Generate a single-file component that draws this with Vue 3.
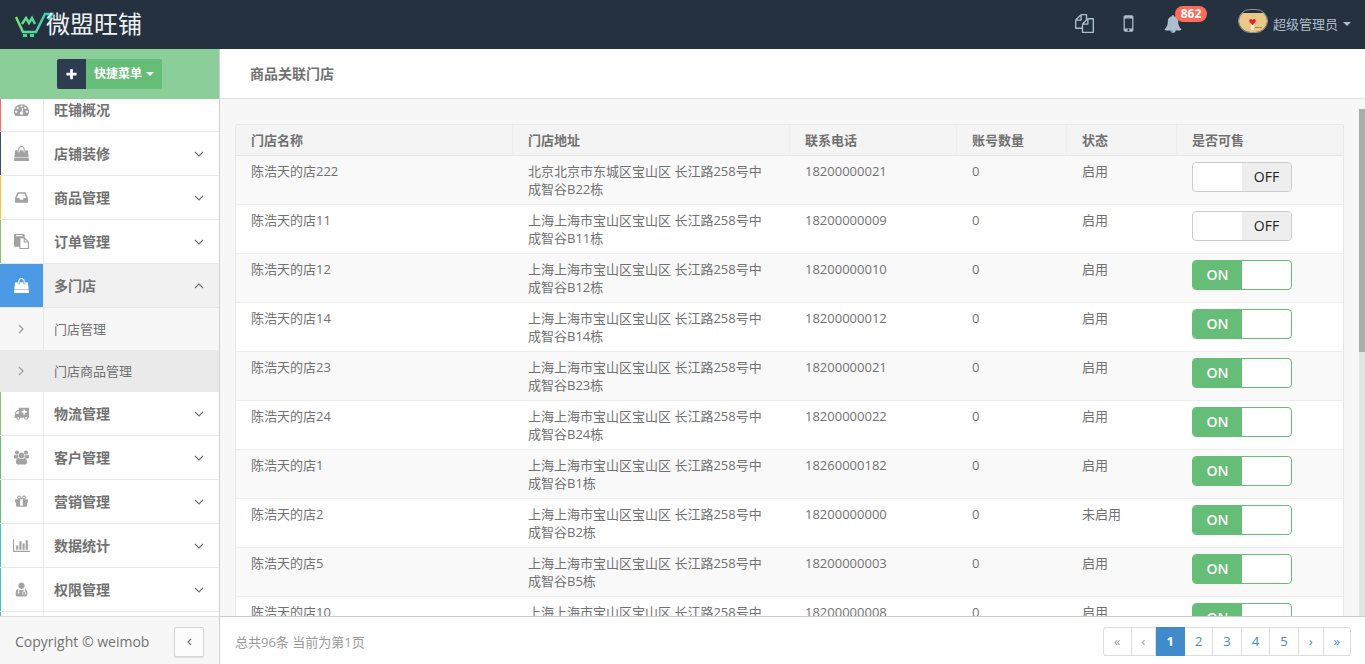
<script setup>
import { onMounted, ref } from 'vue'

const bag =
  'M1757 1408l35 313q3 28-16 50-19 21-48 21h-1664q-29 0-48-21-19-22-16-50l35-313h1722zm-93-839l86 775h-1708l86-775q3-24 21-40.5t43-16.5h256v128q0 53 37.5 90.5t90.5 37.5 90.5-37.5 37.5-90.5v-128h384v128q0 53 37.5 90.5t90.5 37.5 90.5-37.5 37.5-90.5v-128h256q25 0 43 16.5t21 40.5zm-384-185v256q0 26-19 45t-45 19-45-19-19-45v-256q0-106-75-181t-181-75-181 75-75 181v256q0 26-19 45t-45 19-45-19-19-45v-256q0-159 112.5-271.5t271.5-112.5 271.5 112.5 112.5 271.5z'

const menu = [
  {
    name: '旺铺概况',
    color: 'red',
    leaf: true,
    icon: 'M384 1152q0-53-37.5-90.5t-90.5-37.5-90.5 37.5-37.5 90.5 37.5 90.5 90.5 37.5 90.5-37.5 37.5-90.5zm192-448q0-53-37.5-90.5t-90.5-37.5-90.5 37.5-37.5 90.5 37.5 90.5 90.5 37.5 90.5-37.5 37.5-90.5zm428 481l101-382q6-26-7.5-48.5t-38.5-29.5-48 6.5-30 39.5l-101 382q-60 5-107 43.5t-63 98.5q-20 77 20 146t117 89 146-20 89-117q16-60-6-117t-72-91zm660-33q0-53-37.5-90.5t-90.5-37.5-90.5 37.5-37.5 90.5 37.5 90.5 90.5 37.5 90.5-37.5 37.5-90.5zm-640-640q0-53-37.5-90.5t-90.5-37.5-90.5 37.5-37.5 90.5 37.5 90.5 90.5 37.5 90.5-37.5 37.5-90.5zm448 192q0-53-37.5-90.5t-90.5-37.5-90.5 37.5-37.5 90.5 37.5 90.5 90.5 37.5 90.5-37.5 37.5-90.5zm320 448q0 261-141 483-19 29-54 29h-1402q-35 0-54-29-141-221-141-483 0-182 71-348t191-286 286-191 348-71 348 71 286 191 191 286 71 348z',
  },
  { name: '店铺装修', color: 'navy', icon: bag },
  {
    name: '商品管理',
    color: 'yellow',
    icon: 'M1151 960h316q-1-3-2.5-8t-2.5-8l-212-496h-708l-212 496q-1 2-2.5 8t-2.5 8h316l95 192h320zm513 30v482q0 26-19 45t-45 19h-1408q-26 0-45-19t-19-45v-482q0-62 25-123l238-552q10-25 36.5-42t52.5-17h832q26 0 52.5 17t36.5 42l238 552q25 61 25 123z',
  },
  {
    name: '订单管理',
    color: 'lime',
    icon: 'M768 1664h896v-640h-416q-40 0-68-28t-28-68v-416h-384v1152zm256-1440v-64q0-13-9.5-22.5t-22.5-9.5h-704q-13 0-22.5 9.5t-9.5 22.5v64q0 13 9.5 22.5t22.5 9.5h704q13 0 22.5-9.5t9.5-22.5zm256 672h299l-299-299v299zm512 128v672q0 40-28 68t-68 28h-960q-40 0-68-28t-28-68v-160h-544q-40 0-68-28t-28-68v-1344q0-40 28-68t68-28h1088q40 0 68 28t28 68v328q21 13 36 28l408 408q28 28 48 76t20 88z',
  },
  {
    name: '多门店',
    color: 'blue',
    open: true,
    icon: bag,
    children: [{ name: '门店管理' }, { name: '门店商品管理', current: true }],
  },
  {
    name: '物流管理',
    color: 'lime',
    box: '160 64 1700 1700',
    icon: 'M1792 256q26 0 45 19t19 45v1024q0 64-64 64h-32a224 224 0 0 1-448 0h-448a224 224 0 0 1-448 0h-96q-128 0-128-96 0-64 64-64v-400q0-50 36-86l198-198q36-36 86-36h128v-208q0-64 64-64zm-576 192v192h-192v192h192v192h192v-192h192v-192h-192v-192zm-512 208h-128l-256 256v32h384zm-64 656a96 96 0 1 0 1 0zm896 0a96 96 0 1 0 1 0z',
  },
  {
    name: '客户管理',
    color: 'green',
    box: '0 0 1920 1792',
    icon: 'M593 896q-162 5-265 128h-134q-82 0-138-40.5t-56-118.5q0-353 124-353 6 0 43.5 21t97.5 42.5 119 21.5q67 0 133-23-5 37-5 66 0 139 81 256zm1071 637q0 120-73 189.5t-194 69.5h-874q-121 0-194-69.5t-73-189.5q0-53 3.5-103.5t14-109 26.5-108.5 43-97.5 62-81 85.5-53.5 111.5-20q10 0 43 21.5t73 48 107 48 135 21.5 135-21.5 107-48 73-48 43-21.5q61 0 111.5 20t85.5 53.5 62 81 43 97.5 26.5 108.5 14 109 3.5 103.5zm-1024-1277q0 106-75 181t-181 75-181-75-75-181 75-181 181-75 181 75 75 181zm704 384q0 159-112.5 271.5t-271.5 112.5-271.5-112.5-112.5-271.5 112.5-271.5 271.5-112.5 271.5 112.5 112.5 271.5zm576 225q0 78-56 118.5t-138 40.5h-134q-103-123-265-128 81-117 81-256 0-29-5-66 66 23 133 23 59 0 119-21.5t97.5-42.5 43.5-21q124 0 124 353zm-128-609q0 106-75 181t-181 75-181-75-75-181 75-181 181-75 181 75 75 181z',
  },
  {
    name: '营销管理',
    color: 'green',
    icon: 'M1056 1356v-716h-320v716q0 25 18 38.5t46 13.5h192q28 0 46-13.5t18-38.5zm-456-844h195l-126-161q-26-31-69-31-40 0-68 28t-28 68 28 68 68 28zm688-96q0-40-28-68t-68-28q-43 0-69 31l-125 161h194q40 0 68-28t28-68zm376 256v320q0 14-9 23t-23 9h-96v416q0 40-28 68t-68 28h-1088q-40 0-68-28t-28-68v-416h-96q-14 0-23-9t-9-23v-320q0-14 9-23t23-9h440q-93 0-158.5-65.5t-65.5-158.5 65.5-158.5 158.5-65.5q107 0 168 77l128 165 128-165q61-77 168-77 93 0 158.5 65.5t65.5 158.5-65.5 158.5-158.5 65.5h440q14 0 23 9t9 23z',
  },
  {
    name: '数据统计',
    color: 'teal',
    box: '0 0 2048 1792',
    wide: true,
    icon: 'M640 896v512h-256v-512h256zm384-512v1024h-256v-1024h256zm1024 1152v128h-2048v-1536h128v1408h1920zm-640-896v768h-256v-768h256zm384-384v1152h-256v-1152h256z',
  },
  {
    name: '权限管理',
    color: 'teal',
    icon: 'M896 64a384 384 0 1 0 1 0zM480 830q-288 60-288 620 0 278 256 278h896q256 0 256-278 0-560-288-620l-32 240q150 60 150 200v130a64 64 0 1 1-96 0v-130q0-96-118-96t-118 96v130a64 64 0 1 1-96 0v-130q0-150 140-200l20-160q-130 70-266 70t-266-70l-20 270a110 110 0 1 1-120 0z',
  },
]

const rows = ref(
  [
    ['222', '22', '18200000021', '启用', false, '北京北京市东城区宝山区'],
    ['11', '11', '18200000009', '启用', false],
    ['12', '12', '18200000010', '启用', true],
    ['14', '14', '18200000012', '启用', true],
    ['23', '23', '18200000021', '启用', true],
    ['24', '24', '18200000022', '启用', true],
    ['1', '1', '18260000182', '启用', true],
    ['2', '2', '18200000000', '未启用', true],
    ['5', '5', '18200000003', '启用', true],
    ['10', '10', '18200000008', '启用', true],
  ].map(([no, block, phone, status, on, area = '上海上海市宝山区宝山区']) => ({
    name: `陈浩天的店${no}`,
    address: `${area} 长江路258号中成智谷B${block}栋`,
    phone,
    accounts: 0,
    status,
    on,
  })),
)

const pages = [
  { t: '«', off: true },
  { t: '‹', off: true },
  { t: '1', current: true },
  { t: '2' },
  { t: '3' },
  { t: '4' },
  { t: '5' },
  { t: '›' },
  { t: '»' },
]

const nav = ref(null)
onMounted(() => {
  nav.value.scrollTop = 11
})
</script>

<template>
  <div class="app">
    <header class="topbar">
      <a class="logo" href="#">
        <svg width="40" height="28" viewBox="0 0 40 28" fill="none">
          <defs>
            <linearGradient id="brand" x1="0" x2="1">
              <stop offset="0" stop-color="#6fe57a" />
              <stop offset="1" stop-color="#35c9c3" />
            </linearGradient>
          </defs>
          <path d="M2 7l7 15h13l9-18h7l-3 6M8 14l4-6 3 5 3-5 3 6" stroke="url(#brand)" stroke-width="2.500" />
          <path d="M9 24h4v3H9zM16 24h4v3h-4z" fill="#4fd89c" />
        </svg>
        <span>微盟旺铺</span>
      </a>
      <nav class="tools">
        <a href="#" class="tool">
          <svg width="19" height="19" viewBox="0 0 1792 1792"><path fill="currentColor" d="M1696 384q40 0 68 28t28 68v1216q0 40-28 68t-68 28h-960q-40 0-68-28t-28-68v-288h-544q-40 0-68-28t-28-68v-672q0-40 20-88t48-76l408-408q28-28 76-48t88-20h416q40 0 68 28t28 68v328q68-40 128-40h416zm-544 213l-299 299h299v-299zm-640-384l-299 299h299v-299zm196 647l316-316v-416h-384v416q0 40-28 68t-68 28h-416v640h512v-256q0-40 20-88t48-76zm956 804v-1152h-384v416q0 40-28 68t-68 28h-416v640h896z" /></svg>
        </a>
        <a href="#" class="tool">
          <svg width="23" height="23" viewBox="0 0 1792 1792"><path fill="currentColor" d="M976 1408q0-33-23.5-56.5t-56.5-23.5-56.5 23.5-23.5 56.5 23.5 56.5 56.5 23.5 56.5-23.5 23.5-56.5zm208-160v-704q0-13-9.5-22.5t-22.5-9.5h-512q-13 0-22.5 9.5t-9.5 22.5v704q0 13 9.5 22.5t22.5 9.5h512q13 0 22.5-9.5t9.5-22.5zm-192-848q0-16-16-16h-160q-16 0-16 16t16 16h160q16 0 16-16zm288-16v1024q0 52-38 90t-90 38h-512q-52 0-90-38t-38-90v-1024q0-52 38-90t90-38h512q52 0 90 38t38 90z" /></svg>
        </a>
        <a href="#" class="tool">
          <svg width="18" height="18" viewBox="0 0 1792 1792"><path fill="currentColor" d="M912 1696q0-16-16-16-59 0-101.5-42.5t-42.5-101.5q0-16-16-16t-16 16q0 73 51.5 124.5t124.5 51.5q16 0 16-16zm816-288q0 52-38 90t-90 38h-448q0 106-75 181t-181 75-181-75-75-181h-448q-52 0-90-38t-38-90q50-42 91-88t85-119.5 74.5-158.5 50-206 19.5-260q0-152 117-282.5t307-158.5q-8-19-8-39 0-40 28-68t68-28 68 28 28 68q0 20-8 39 190 28 307 158.5t117 282.5q0 139 19.5 260t50 206 74.5 158.5 85 119.5 91 88z" /></svg>
          <span class="badge">862</span>
        </a>
      </nav>
      <button class="user" type="button">
        <svg width="30" height="24" viewBox="0 0 30 24">
          <defs><clipPath id="face"><rect x="1" y="1" width="28" height="22" rx="12" /></clipPath></defs>
          <rect y="4" width="30" height="20" fill="#e8c987" clip-path="url(#face)" />
          <rect x="0.5" y="0.5" width="29" height="23" rx="11.5" fill="none" stroke="#8d968f" />
          <path d="M14.500 16l-3-3q-1-3 1.500-3l1.500 1 1.500-1q2.500 0 1.500 3z" fill="#e8202a" />
          <path d="M13 16h3v5h-3z" fill="#f6efdf" />
          <path d="M17 18.500h7" stroke="#a08a5c" />
        </svg>
        <span>超级管理员</span>
        <i class="caret"></i>
      </button>
    </header>

    <div class="body">
      <aside class="side">
        <div class="quick">
          <button class="quick-add" type="button">
            <svg width="13" height="13" viewBox="0 0 1792 1792"><path fill="currentColor" d="M1600 736v192q0 40-28 68t-68 28h-416v416q0 40-28 68t-68 28h-192q-40 0-68-28t-28-68v-416h-416q-40 0-68-28t-28-68v-192q0-40 28-68t68-28h416v-416q0-40 28-68t68-28h192q40 0 68 28t28 68v416h416q40 0 68 28t28 68z" /></svg>
          </button>
          <button class="quick-menu" type="button">快捷菜单<i class="caret"></i></button>
        </div>
        <nav ref="nav" class="nav">
          <ul>
            <li v-for="m in menu" :key="m.name">
              <a href="#" class="item" :class="[m.color, { open: m.open }]">
                <span class="ico">
                  <svg :width="m.wide ? 17 : 15" height="15" :viewBox="m.box || '0 0 1792 1792'"><path fill="currentColor" fill-rule="evenodd" :d="m.icon" /></svg>
                </span>
                <span class="label">{{ m.name }}</span>
                <svg v-if="!m.leaf" class="arrow" width="10" height="6" viewBox="0 0 10 6"><path fill="none" stroke="currentColor" stroke-width="1.200" :d="m.open ? 'M1 5l4-4 4 4' : 'M1 1l4 4 4-4'" /></svg>
              </a>
              <ul v-if="m.children">
                <li v-for="c in m.children" :key="c.name">
                  <a href="#" class="sub" :class="{ current: c.current }">
                    <span class="ico"><svg width="6" height="10" viewBox="0 0 6 10"><path fill="none" stroke="currentColor" stroke-width="1.400" d="M1 1l4 4-4 4" /></svg></span>
                    <span class="label">{{ c.name }}</span>
                  </a>
                </li>
              </ul>
            </li>
            <li class="item teal"><span class="ico"></span></li>
          </ul>
        </nav>
        <footer class="side-foot">
          <span>Copyright © weimob</span>
          <button type="button">
            <svg width="5" height="8" viewBox="0 0 5 8"><path fill="none" stroke="currentColor" stroke-width="1.200" d="M4 1l-3 3 3 3" /></svg>
          </button>
        </footer>
      </aside>

      <main class="main">
        <h1>商品关联门店</h1>
        <div class="scroll">
          <div class="view">
            <table>
              <colgroup>
                <col /><col /><col class="phone" /><col class="slim" /><col class="slim" /><col class="sale" />
              </colgroup>
              <thead>
                <tr>
                  <th>门店名称</th>
                  <th>门店地址</th>
                  <th>联系电话</th>
                  <th>账号数量</th>
                  <th>状态</th>
                  <th>是否可售</th>
                </tr>
              </thead>
              <tbody>
                <tr v-for="r in rows" :key="r.name">
                  <td>{{ r.name }}</td>
                  <td>{{ r.address }}</td>
                  <td>{{ r.phone }}</td>
                  <td>{{ r.accounts }}</td>
                  <td>{{ r.status }}</td>
                  <td>
                    <label class="toggle" :class="{ on: r.on }">
                      <input v-model="r.on" type="checkbox" />
                      <span>{{ r.on ? 'ON' : 'OFF' }}</span>
                    </label>
                  </td>
                </tr>
              </tbody>
            </table>
          </div>
          <div class="rail"><div class="thumb"></div></div>
        </div>
        <footer class="foot">
          <span>总共96条 当前为第1页</span>
          <nav class="pager">
            <a v-for="p in pages" :key="p.t" href="#" :class="{ off: p.off, current: p.current }">{{ p.t }}</a>
          </nav>
        </footer>
      </main>
    </div>
  </div>
</template>

<style>
body {
  margin: 0;
}
</style>

<style scoped>
* {
  box-sizing: border-box;
}
.app {
  display: flex;
  flex-direction: column;
  height: 100vh;
  overflow: hidden;
  font-family: 'Open Sans', 'Noto Sans CJK SC', sans-serif;
  font-size: 13px;
  line-height: 18px;
  color: #717171;
}
a {
  color: inherit;
  text-decoration: none;
}
button {
  padding: 0;
  border: 0;
  font: inherit;
  cursor: pointer;
}
ul {
  margin: 0;
  padding: 0;
  list-style: none;
}
.caret {
  border: 4px solid transparent;
  border-top-color: currentColor;
  border-bottom: 0;
}
.topbar {
  display: flex;
  align-items: center;
  flex: none;
  height: 49px;
  padding: 0 14px 2px;
  background: #25313e;
  color: #adbece;
}
.logo {
  display: flex;
  align-items: center;
  margin-right: auto;
  color: #eef1f3;
}
.logo span {
  margin-left: -8px;
  font-size: 24px;
  line-height: 28px;
}
.tools {
  display: flex;
  align-items: center;
}
.tool {
  position: relative;
  display: flex;
  justify-content: center;
  width: 44px;
}
.badge {
  position: absolute;
  top: -9px;
  left: 24px;
  width: 32px;
  border-radius: 10px;
  background: #fe6a5c;
  color: #fff;
  font-size: 12px;
  font-weight: 700;
  line-height: 16px;
  text-align: center;
}
.user {
  display: flex;
  align-items: center;
  gap: 5px;
  margin-left: 43px;
  background: none;
  color: inherit;
}
.user svg {
  margin-bottom: 6px;
}
.body {
  display: flex;
  flex: 1;
  min-height: 0;
}
.side {
  display: flex;
  flex-direction: column;
  flex: none;
  width: 220px;
  border-right: 1px solid #d0d0d0;
  background: #fefefe;
}
.quick {
  display: flex;
  justify-content: center;
  align-items: center;
  flex: none;
  height: 50px;
  background: #8bce99;
  color: #fff;
}
.quick button {
  display: flex;
  align-items: center;
  justify-content: center;
  height: 30px;
  color: #fff;
}
.quick .quick-add {
  width: 29px;
  border-radius: 2px 0 0 2px;
  background: #2d3c4e;
}
.quick .quick-menu {
  gap: 4px;
  padding: 0 8px;
  border-radius: 0 2px 2px 0;
  background: #65bd77;
  font-size: 12px;
  font-weight: 700;
}
.nav {
  flex: 1;
  min-height: 0;
  overflow: hidden;
}
.item,
.sub {
  display: flex;
  align-items: center;
  height: 44px;
}
.item {
  border-bottom: 1px solid #e8e8e8;
  font-size: 14px;
  font-weight: 700;
}
.ico {
  display: flex;
  align-items: center;
  justify-content: center;
  align-self: stretch;
  width: 44px;
  padding-right: 2px;
  border-right: 1px solid #e8e8e8;
  color: #a2a2a2;
}
.item .ico {
  border-left: 1px solid var(--c);
}
.red {
  --c: #fe6a5c;
}
.navy {
  --c: #3a4c62;
}
.yellow {
  --c: #ffc333;
}
.lime {
  --c: #8ec165;
}
.blue {
  --c: #4c9ae6;
}
.green {
  --c: #65bd77;
}
.teal {
  --c: #4cc0c1;
}
.label {
  flex: 1;
  padding-left: 10px;
}
.arrow {
  margin-right: 15px;
}
.open {
  background: #f1f1f1;
}
.open .ico {
  background: #4c9ae6;
  color: #fff;
}
.sub {
  height: 42px;
  background: #f7f7f7;
}
.sub.current {
  background: #eaeaea;
}
.sub.current .ico {
  border-color: #eaeaea;
}
.side-foot {
  display: flex;
  align-items: center;
  justify-content: space-between;
  flex: none;
  height: 48px;
  padding: 2px 15px 0;
  border-top: 1px solid #ddd;
  background: #f7f7f7;
  font-size: 14px;
}
.side-foot button {
  display: flex;
  align-items: center;
  justify-content: center;
  width: 30px;
  height: 30px;
  border: 1px solid #d5d5d5;
  border-radius: 2px;
  background: #fcfcfc;
  box-shadow: 0 1px 1px #ddd;
  color: #717171;
}
.main {
  display: flex;
  flex-direction: column;
  flex: 1;
  min-width: 0;
  background: #f7f7f7;
}
h1 {
  flex: none;
  margin: 0;
  padding: 0 30px;
  border-bottom: 1px solid #e0e0e0;
  background: #fff;
  font-size: 14px;
  line-height: 49px;
}
.scroll {
  display: flex;
  flex: 1;
  min-height: 0;
}
.view {
  flex: 1;
  min-width: 0;
  padding: 25px 15px 0;
  overflow: hidden;
}
.rail {
  flex: none;
  width: 6px;
  margin-top: 10px;
  background: #e3e3e3;
}
.thumb {
  height: 48%;
  background: #adadad;
}
table {
  width: 100%;
  table-layout: fixed;
  border: 1px solid #e8e8e8;
  border-radius: 2px;
  border-spacing: 0;
  background: #fff;
}
.phone {
  width: 167px;
}
.slim {
  width: 110px;
}
.sale {
  width: 166px;
}
th,
td {
  padding: 6px 15px;
  border-bottom: 1px solid #eee;
  text-align: left;
  vertical-align: top;
}
td {
  padding-right: 22px;
}
th {
  border-bottom-color: #e4e4e4;
  border-right: 1px solid #eee;
  background: #f4f4f4;
}
th:last-child {
  border-right: 0;
}
tbody tr:nth-child(odd) {
  background: #f9f9f9;
}
.toggle {
  position: relative;
  display: flex;
  width: 100px;
  height: 30px;
  border: 1px solid #ccc;
  border-radius: 4px;
  background: #fff;
  color: #222;
  overflow: hidden;
  cursor: pointer;
}
.toggle input {
  position: absolute;
  opacity: 0;
}
.toggle span {
  width: 50%;
  margin-left: auto;
  background: #eee;
  font-size: 14px;
  line-height: 28px;
  text-align: center;
}
.toggle.on {
  border-color: #65bd77;
}
.toggle.on span {
  margin-left: 0;
  background: #65bd77;
  color: #fff;
  font-weight: 600;
}
.foot {
  display: flex;
  align-items: center;
  justify-content: space-between;
  flex: none;
  height: 48px;
  padding: 2px 14px 0 15px;
  border-top: 1px solid #ccc;
  background: #fff;
  color: #999;
}
.pager {
  display: flex;
  border: 1px solid #ddd;
  border-radius: 3px;
  color: #428bca;
}
.pager a {
  margin: -1px 0;
  padding: 0 10px;
  border: solid #ddd;
  border-width: 1px 1px 1px 0;
  line-height: 27px;
  text-align: center;
}
.pager a:last-child {
  border-right: 0;
}
.pager .off {
  color: #999;
}
.pager .current {
  border-color: #428bca;
  background: #428bca;
  color: #fff;
  font-weight: 700;
}
</style>
